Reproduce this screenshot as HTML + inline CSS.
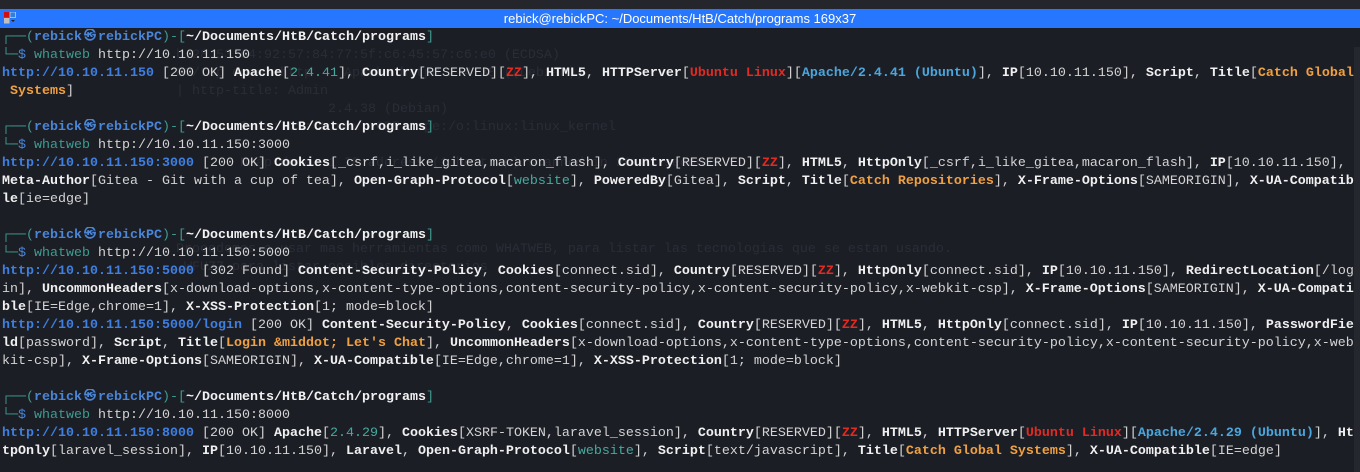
<!DOCTYPE html>
<html><head><meta charset="utf-8"><style>
html,body{margin:0;padding:0;width:1360px;height:472px;overflow:hidden;background:#1c1e26;}
.top{position:absolute;left:0;top:0;width:1360px;height:9px;background:#25262b;}
.tb{position:absolute;left:0;top:9px;width:1360px;height:19px;background:#2777fe;color:#fff;font:13px "Liberation Sans",sans-serif;text-align:center;line-height:19px;}
.ico{position:absolute;left:4px;top:3px;width:12px;height:12px;}
.sb{position:absolute;left:1354px;top:47px;width:6px;height:425px;background:#25272f;}
.t{position:absolute;left:2px;top:29px;font-family:"Liberation Mono",monospace;font-size:13.33px;color:#d4d4d4;}
.t div{height:18px;line-height:18px;white-space:pre;}
b{color:#f2f2f2;}
.g{color:#3e9c8f}.u{color:#3e7fe0;font-weight:bold}.p{color:#4a86d8;font-weight:bold}.w{color:#f0f0f0;font-weight:bold}
.v{color:#46aa9c}.r{color:#e02b22;font-weight:bold}.o{color:#f0a040;font-weight:bold}.l{color:#4aa6dc;font-weight:bold}.d{color:#4a86d8}
.k{display:inline-block;width:16px;text-align:center;font-size:12px;line-height:14px;vertical-align:top;overflow:hidden;color:#4a86d8}
.gh{position:absolute;font-family:"Liberation Mono",monospace;font-size:13.33px;color:#2a2d36;white-space:pre;line-height:18px;}
</style></head><body>
<div class="top"></div>
<div class="tb"><svg class="ico" viewBox="0 0 12 12"><rect x="0" y="0" width="5.5" height="5.5" fill="#d01010"/><rect x="6" y="0" width="5.5" height="5.5" fill="#3080e0" stroke="#fff" stroke-width="0.5"/><rect x="0" y="6" width="5.5" height="5.5" fill="#c0c0c0"/><path d="M7 8h4l-2 2z" fill="#222"/></svg>rebick@rebickPC: ~/Documents/HtB/Catch/programs 169x37</div>
<div class="sb"></div>
<div class="gh" style="left:176px;top:47px">b:28:53:64:92:57:84:77:5f:c6:45:57:c6:e0 (ECDSA)
80/tcp open  http    Apache httpd 2.4.38 ((Debian))
| http-title: Admin
                   2.4.38 (Debian)
        Info: OS: Linux; CPE: cpe:/o:linux:linux_kernel

        Nmap done: 1 IP address (1 host up) scanned in 20.03 seconds</div>
<div class="gh" style="left:176px;top:241px">Procedemos a usar mas herramientas como WHATWEB, para listar las tecnologias que se estan usando.
 WFUZZ para listar posibles directorios</div>
<div class="t">
<div><span class="g">┌──(</span><span class="p">rebick<span class="k">㉿</span>rebickPC</span><span class="g">)-[</span><b>~/Documents/HtB/Catch/programs</b><span class="g">]</span></div>
<div><span class="g">└─</span><span class="d">$</span> <span class="g">whatweb</span> http://10.10.11.150</div>
<div><span class="u">http://10.10.11.150</span> [200 OK] <span class="w">Apache</span>[<span class="v">2.4.41</span>], <span class="w">Country</span>[RESERVED][<span class="r">ZZ</span>], <span class="w">HTML5</span>, <span class="w">HTTPServer</span>[<span class="r">Ubuntu Linux</span>][<span class="l">Apache/2.4.41 (Ubuntu)</span>], <span class="w">IP</span>[10.10.11.150], <span class="w">Script</span>, <span class="w">Title</span>[<span class="o">Catch Global</span></div>
<div><span class="o"> Systems</span>]</div>
<div> </div>
<div><span class="g">┌──(</span><span class="p">rebick<span class="k">㉿</span>rebickPC</span><span class="g">)-[</span><b>~/Documents/HtB/Catch/programs</b><span class="g">]</span></div>
<div><span class="g">└─</span><span class="d">$</span> <span class="g">whatweb</span> http://10.10.11.150:3000</div>
<div><span class="u">http://10.10.11.150:3000</span> [200 OK] <span class="w">Cookies</span>[_csrf,i_like_gitea,macaron_flash], <span class="w">Country</span>[RESERVED][<span class="r">ZZ</span>], <span class="w">HTML5</span>, <span class="w">HttpOnly</span>[_csrf,i_like_gitea,macaron_flash], <span class="w">IP</span>[10.10.11.150],</div>
<div><span class="w">Meta-Author</span>[Gitea - Git with a cup of tea], <span class="w">Open-Graph-Protocol</span>[<span class="v">website</span>], <span class="w">PoweredBy</span>[Gitea], <span class="w">Script</span>, <span class="w">Title</span>[<span class="o">Catch Repositories</span>], <span class="w">X-Frame-Options</span>[SAMEORIGIN], <span class="w">X-UA-Compatib</span></div>
<div><span class="w">le</span>[ie=edge]</div>
<div> </div>
<div><span class="g">┌──(</span><span class="p">rebick<span class="k">㉿</span>rebickPC</span><span class="g">)-[</span><b>~/Documents/HtB/Catch/programs</b><span class="g">]</span></div>
<div><span class="g">└─</span><span class="d">$</span> <span class="g">whatweb</span> http://10.10.11.150:5000</div>
<div><span class="u">http://10.10.11.150:5000</span> [302 Found] <span class="w">Content-Security-Policy</span>, <span class="w">Cookies</span>[connect.sid], <span class="w">Country</span>[RESERVED][<span class="r">ZZ</span>], <span class="w">HttpOnly</span>[connect.sid], <span class="w">IP</span>[10.10.11.150], <span class="w">RedirectLocation</span>[/log</div>
<div>in], <span class="w">UncommonHeaders</span>[x-download-options,x-content-type-options,content-security-policy,x-content-security-policy,x-webkit-csp], <span class="w">X-Frame-Options</span>[SAMEORIGIN], <span class="w">X-UA-Compati</span></div>
<div><span class="w">ble</span>[IE=Edge,chrome=1], <span class="w">X-XSS-Protection</span>[1; mode=block]</div>
<div><span class="u">http://10.10.11.150:5000/login</span> [200 OK] <span class="w">Content-Security-Policy</span>, <span class="w">Cookies</span>[connect.sid], <span class="w">Country</span>[RESERVED][<span class="r">ZZ</span>], <span class="w">HTML5</span>, <span class="w">HttpOnly</span>[connect.sid], <span class="w">IP</span>[10.10.11.150], <span class="w">PasswordFie</span></div>
<div><span class="w">ld</span>[password], <span class="w">Script</span>, <span class="w">Title</span>[<span class="o">Login &amp;middot; Let's Chat</span>], <span class="w">UncommonHeaders</span>[x-download-options,x-content-type-options,content-security-policy,x-content-security-policy,x-web</div>
<div>kit-csp], <span class="w">X-Frame-Options</span>[SAMEORIGIN], <span class="w">X-UA-Compatible</span>[IE=Edge,chrome=1], <span class="w">X-XSS-Protection</span>[1; mode=block]</div>
<div> </div>
<div><span class="g">┌──(</span><span class="p">rebick<span class="k">㉿</span>rebickPC</span><span class="g">)-[</span><b>~/Documents/HtB/Catch/programs</b><span class="g">]</span></div>
<div><span class="g">└─</span><span class="d">$</span> <span class="g">whatweb</span> http://10.10.11.150:8000</div>
<div><span class="u">http://10.10.11.150:8000</span> [200 OK] <span class="w">Apache</span>[<span class="v">2.4.29</span>], <span class="w">Cookies</span>[XSRF-TOKEN,laravel_session], <span class="w">Country</span>[RESERVED][<span class="r">ZZ</span>], <span class="w">HTML5</span>, <span class="w">HTTPServer</span>[<span class="r">Ubuntu Linux</span>][<span class="l">Apache/2.4.29 (Ubuntu)</span>], <span class="w">Ht</span></div>
<div><span class="w">tpOnly</span>[laravel_session], <span class="w">IP</span>[10.10.11.150], <span class="w">Laravel</span>, <span class="w">Open-Graph-Protocol</span>[<span class="v">website</span>], <span class="w">Script</span>[text/javascript], <span class="w">Title</span>[<span class="o">Catch Global Systems</span>], <span class="w">X-UA-Compatible</span>[IE=edge]</div>
</div>
</body></html>
